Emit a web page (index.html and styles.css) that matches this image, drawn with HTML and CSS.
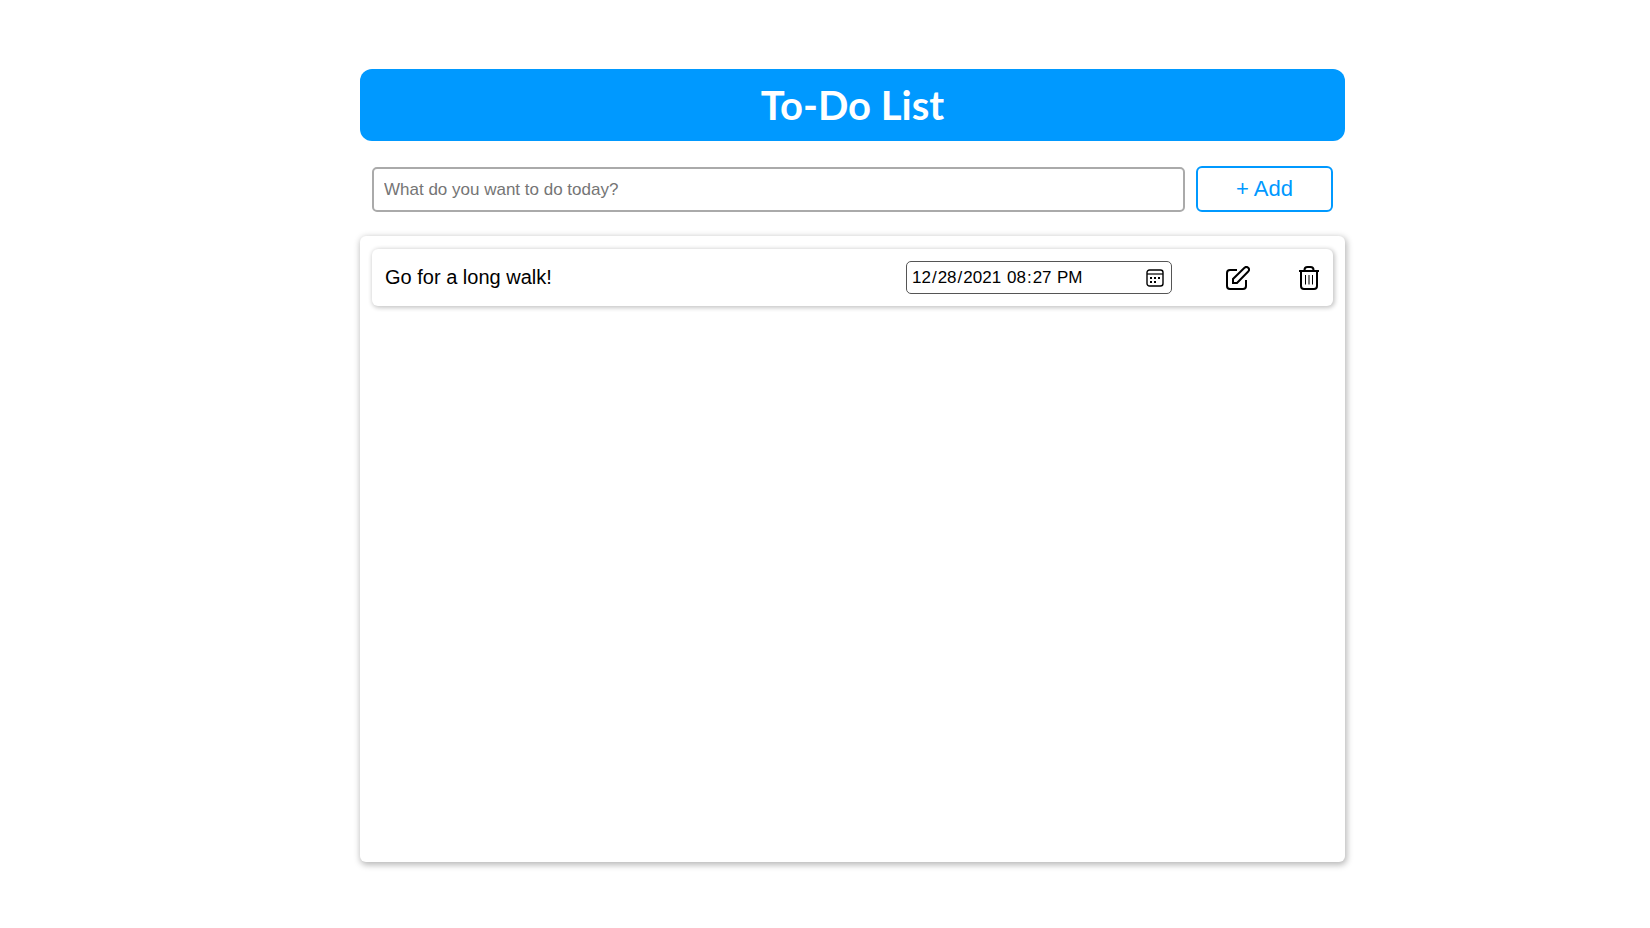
FILE: index.html
```html
<!DOCTYPE html>
<html lang="en">
<head>
<meta charset="utf-8">
<meta name="viewport" content="width=device-width, initial-scale=1">
<title>To-Do List</title>
<link rel="stylesheet" href="styles.css">
</head>
<body>
<main class="app">
  <h1 class="title">To-Do List</h1>
  <form class="new-task">
    <input class="task-input" type="text" aria-label="New task" placeholder="What do you want to do today?">
    <button class="add-button" type="button">+ Add</button>
  </form>
  <ul class="task-list">
    <li class="task">
      <span class="task-name">Go for a long walk!</span>
      <div class="due">
        <input class="due-input due-date" type="date" aria-label="Due date" value="2021-12-28">
        <input class="due-input due-time" type="time" aria-label="Due time" value="20:27">
        <svg class="due-icon" viewBox="0 0 18 18" aria-hidden="true">
          <rect x="1" y="1" width="16" height="16" rx="2.5" fill="none" stroke="#000" stroke-width="1.4"/>
          <path d="M1 5h16" stroke="#000" stroke-width="1.2"/>
          <path d="M4 8h2v2H4zM8 8h2v2H8zM12 8h2v2h-2zM4 12h2v2H4zM8 12h2v2H8z" fill="#000"/>
        </svg>
      </div>
      <div class="actions">
        <button class="icon-button" type="button" aria-label="Edit task">
          <svg viewBox="0 0 24 24" aria-hidden="true">
            <path d="M11 4H4a3 3 0 0 0-3 3v13a3 3 0 0 0 3 3h13a3 3 0 0 0 3-3v-6M7 17v-4L18.500 1.800a2.600 2.600 0 0 1 3.700 3.700L11 17z"/>
          </svg>
        </button>
        <button class="icon-button" type="button" aria-label="Delete task">
          <svg viewBox="0 0 24 24" aria-hidden="true">
            <path d="M2 5h20M4 5v15a3 3 0 0 0 3 3h10a3 3 0 0 0 3-3V5M7.500 5V4a3 3 0 0 1 3-3h3a3 3 0 0 1 3 3v1"/>
            <path class="thin" d="M8.500 9v9.500M12 9v9.500M15.500 9v9.500"/>
          </svg>
        </button>
      </div>
    </li>
  </ul>
</main>
</body>
</html>
```
FILE: styles.css
```css
* {
  box-sizing: border-box;
}

body {
  margin: 0;
  background: #fff;
  color: #000;
  font-family: "Liberation Sans", Arial, sans-serif;
}

.app {
  display: flex;
  flex-direction: column;
  min-height: 100vh;
  padding: 69px 305px 66px 360px;
}

.title {
  margin: 0;
  padding: 12px;
  border-radius: 12px;
  background: #09f;
  color: #fff;
  font: bold 40px/48px "Trebuchet MS", Lato, sans-serif;
  text-align: center;
}

.new-task {
  display: flex;
  align-items: flex-end;
  gap: 11px;
  padding: 25px 12px 24px;
}

.task-input {
  flex: 1;
  min-width: 0;
  height: 45px;
  padding: 0 10px;
  border: 2px solid #aaa;
  border-radius: 5px;
  font: 17px "Liberation Sans", Arial, sans-serif;
}

.task-input::placeholder {
  color: #757575;
}

.add-button {
  width: 137px;
  height: 46px;
  border: 2px solid #09f;
  border-radius: 6px;
  background: #fff;
  color: #09f;
  font: 22px "Liberation Sans", Arial, sans-serif;
}

.task-list {
  flex: 1;
  margin: 0;
  padding: 13px 12px;
  border-radius: 6px;
  box-shadow: 1px 2px 6px 1px rgba(0, 0, 0, 0.28);
  list-style: none;
}

.task {
  display: flex;
  align-items: center;
  padding: 12px 12px 12px 13px;
  border-radius: 6px;
  box-shadow: 1px 1px 4px 1px rgba(0, 0, 0, 0.22);
}

.task-name {
  flex: 1;
  font-size: 20px;
}

.due {
  display: flex;
  align-items: center;
  width: 266px;
  height: 33px;
  padding: 0 7px 0 4px;
  border: 1px solid #555;
  border-radius: 5px;
}

.due-input {
  padding: 0;
  border: 0;
  background: none;
  color: #000;
  font: 17px "Liberation Sans", Arial, sans-serif;
}

.due-date {
  width: 92px;
}

.due-time {
  margin-left: 3px;
}

.due-input::-webkit-calendar-picker-indicator {
  display: none;
}

.due-icon {
  width: 18px;
  height: 18px;
  margin-left: auto;
}

.actions {
  display: flex;
  gap: 47px;
  margin-left: 54px;
}

.icon-button {
  width: 24px;
  height: 24px;
  padding: 0;
  border: 0;
  background: none;
}

.icon-button svg {
  display: block;
  width: 24px;
  height: 24px;
  fill: none;
  stroke: #000;
  stroke-width: 2;
}

.icon-button .thin {
  stroke-width: 1;
}
```
